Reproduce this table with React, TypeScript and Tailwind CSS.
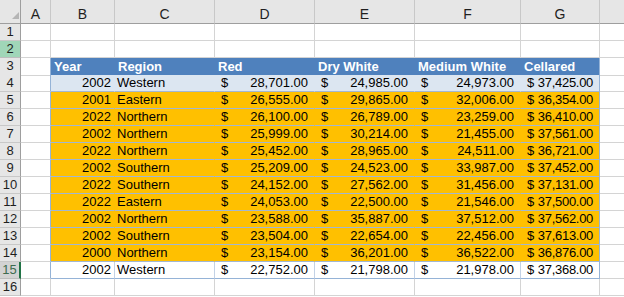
import React from 'react';

const GRID = 'grid grid-cols-[21px_30px_64px_100px_100px_100px_106px_79px_1fr]';
const LETTERS = ['A', 'B', 'C', 'D', 'E', 'F', 'G'];

type Row = [string, string, string, string, string, string];

const DATA: Row[] = [
  ['2002', 'Western', '28,701.00', '24,985.00', '24,973.00', '37,425.00'],
  ['2001', 'Eastern', '26,555.00', '29,865.00', '32,006.00', '36,354.00'],
  ['2022', 'Northern', '26,100.00', '26,789.00', '23,259.00', '36,410.00'],
  ['2002', 'Northern', '25,999.00', '30,214.00', '21,455.00', '37,561.00'],
  ['2022', 'Northern', '25,452.00', '28,965.00', '24,511.00', '36,721.00'],
  ['2002', 'Southern', '25,209.00', '24,523.00', '33,987.00', '37,452.00'],
  ['2022', 'Southern', '24,152.00', '27,562.00', '31,456.00', '37,131.00'],
  ['2022', 'Eastern', '24,053.00', '22,500.00', '21,546.00', '37,500.00'],
  ['2002', 'Northern', '23,588.00', '35,887.00', '37,512.00', '37,562.00'],
  ['2002', 'Southern', '23,504.00', '22,654.00', '22,456.00', '37,613.00'],
  ['2000', 'Northern', '23,154.00', '36,201.00', '36,522.00', '36,876.00'],
  ['2002', 'Western', '22,752.00', '21,798.00', '21,978.00', '37,368.00'],
];

const HEADERS = ['Year', 'Region', 'Red', 'Dry White', 'Medium White', 'Cellared'];

const RowHeader = ({ n }: { n: number }) => {
  // row 2 shows the green selection tint, row 15 holds the active cell
  if (n === 2) {
    return <div className="bg-[#a0d6b8] border-r border-b border-r-[#9e9e9e] border-b-[#bdbdbd] text-center text-[#1f1f1f]">{n}</div>;
  }
  if (n === 15) {
    return <div className="bg-[#d3d3d3] border-r-2 border-b border-r-[#217346] border-b-[#bdbdbd] text-center text-[#3d6b4f]">{n}</div>;
  }
  return <div className="bg-[#e6e6e6] border-r border-b border-r-[#9e9e9e] border-b-[#c8c8c8] text-center text-[#1f1f1f]">{n}</div>;
};

const EmptyCell = ({ extra = '' }: { extra?: string }) => (
  <div className={`border-r border-b border-r-[#d4d4d4] border-b-[#d4d4d4] ${extra}`} />
);

const Money = ({ value, cls, tight = false }: { value: string; cls: string; tight?: boolean }) => (
  <div className={`flex justify-between pl-[6px] pr-[6px] border-b border-r ${cls}`}>
    <span>$</span>
    <span className={tight ? 'tracking-[-0.3px]' : ''}>{value}</span>
  </div>
);

export default function App() {
  return (
    <div className="w-[624px] h-[297px] overflow-hidden bg-white text-[13px] leading-[16px] text-black font-['Liberation_Sans',Arial,sans-serif]">
      {/* column letters */}
      <div className={`${GRID} h-[24px] bg-[#e6e6e6]`}>
        <div className="relative border-r border-b border-r-[#9e9e9e] border-b-[#9e9e9e]">
          <svg className="absolute left-[12px] top-[12px]" width="7" height="7" viewBox="0 0 7 7">
            <polygon points="7,0 7,7 0,7" fill="#b5b5b5" />
          </svg>
        </div>
        {LETTERS.map(l => (
          <div key={l} className="flex items-end justify-center leading-[18px] border-r border-b border-r-[#c8c8c8] border-b-[#9e9e9e] text-[14px] text-[#1f1f1f]">
            {l}
          </div>
        ))}
        <div className="border-b border-b-[#9e9e9e]" />
      </div>

      {/* rows 1-2 */}
      {[1, 2].map(n => (
        <div key={n} className={`${GRID} h-[17px]`}>
          <RowHeader n={n} />
          {LETTERS.map(l => <EmptyCell key={l} />)}
          <div className="border-b border-b-[#d4d4d4]" />
        </div>
      ))}

      {/* table header row */}
      <div className={`${GRID} h-[17px]`}>
        <RowHeader n={3} />
        <div className="border-r border-b border-r-[#95b3d7] border-b-[#d4d4d4]" />
        {HEADERS.map((h, i) => (
          <div
            key={h}
            className={`bg-[#4f81bd] text-white font-bold pl-[3px] pt-[1px] border-b border-r border-b-[#95b3d7] whitespace-nowrap ${i === 5 ? 'border-r-[#95b3d7]' : 'border-r-[#4f81bd]'}`}
          >
            {h}
          </div>
        ))}
        <div className="border-b border-b-[#d4d4d4]" />
      </div>

      {/* table body */}
      {DATA.map((row, idx) => {
        const n = idx + 4;
        const first = idx === 0;
        const last = idx === DATA.length - 1;
        const bg = first ? 'bg-[#dce6f1]' : last ? 'bg-white' : 'bg-[#ffc000]';
        const vline = first ? 'border-r-[#dce6f1]' : last ? 'border-r-[#c3d2e6]' : 'border-r-[#ffc000]';
        const hline = last ? 'border-b-[#95b3d7]' : 'border-b-[#a2b7d2]';
        return (
          <div key={n} className={`${GRID} h-[17px]`}>
            <RowHeader n={n} />
            <div className="border-r border-b border-r-[#95b3d7] border-b-[#d4d4d4]" />
            <div className={`${bg} text-right pr-[3px] border-b border-r ${hline} ${vline}`}>{row[0]}</div>
            <div className={`${bg} pl-[2px] border-b border-r ${hline} ${vline}`}>{row[1]}</div>
            <Money value={row[2]} cls={`${bg} ${hline} ${vline}`} />
            <Money value={row[3]} cls={`${bg} ${hline} ${vline}`} />
            <Money value={row[4]} cls={`${bg} ${hline} ${vline}`} />
            <Money value={row[5]} cls={`${bg} ${hline} border-r-[#95b3d7]`} tight />
            <div className="border-b border-b-[#d4d4d4]" />
          </div>
        );
      })}

      {/* row 16 */}
      <div className={`${GRID} h-[17px]`}>
        <RowHeader n={16} />
        {LETTERS.map(l => <EmptyCell key={l} />)}
        <div className="border-b border-b-[#d4d4d4]" />
      </div>
    </div>
  );
}
